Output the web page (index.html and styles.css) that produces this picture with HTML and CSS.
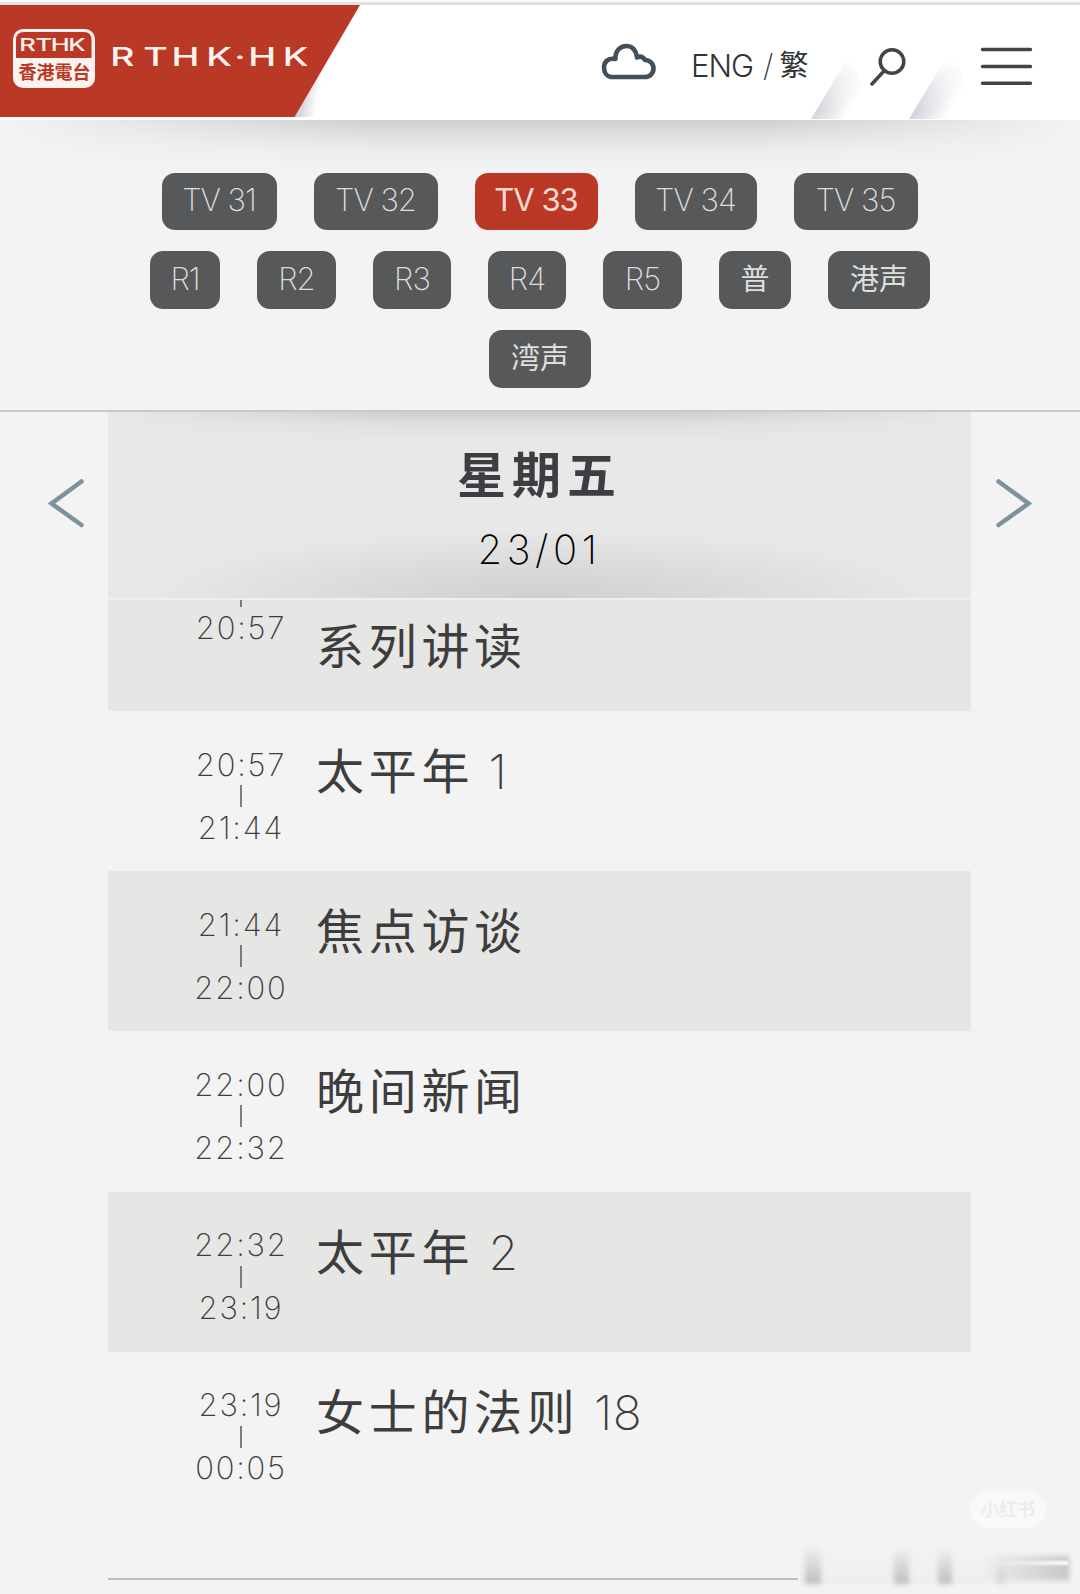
FILE: index.html
```html
<!DOCTYPE html>
<html lang="zh-Hans">
<head>
<meta charset="utf-8">
<title>RTHK.HK</title>
<link rel="stylesheet" href="styles.css">
</head>
<body>
<header class="topbar">
  <svg class="brand" width="380" height="114" viewBox="0 5 380 114" role="img" aria-label="RTHK.HK">
    <defs>
      <linearGradient id="fold" x1="0" y1="0" x2="1" y2="0.3"><stop offset="0.3" stop-color="#c9c4c8"/><stop offset="0.75" stop-color="#fff"/></linearGradient>
    </defs>
    <path d="M292 117L336 44L314 117Z" fill="url(#fold)"/>
    <path d="M0 5H360L294.500 117H0Z" fill="#b93826"/>
    <rect x="13" y="29" width="82" height="59" rx="10" fill="#fff3ef"/>
    <path d="M16 58V40Q16 32 24 32H84Q91.500 32 91.500 40V58Z" fill="#b93826"/>
    <g class="mark" transform="scale(1.5 1)"><text y="51" x="12.800 23.600 33.800 45.500">RTHK</text></g>
    <text class="mark-cn" x="18.500 36.500 54.500 72.500" y="78.500">香港電台</text>
    <g class="wordmark" transform="scale(1.5 1)"><text y="66.300" x="73.500 95.500 114.300 137.500 156.200 165.500 188.500">RTHK·HK</text></g>
  </svg>
  <svg class="cloud" width="56" height="38" viewBox="601 43 56 38"><path d="M611 77H645A8.500 8.500 0 0 0 645 60Q642 55 637 57.500C636 50 632 46 626.500 46C620 46 615 51 615.500 59C608 57.500 604 62 604 67.500C604 73 607 76.500 611 77Z"/></svg>
  <nav class="lang"><a>ENG</a><i>/</i><a class="trad">繁</a></nav>
  <svg class="tools" width="270" height="114" viewBox="810 5 270 114">
    <defs>
      <linearGradient id="s1" gradientUnits="userSpaceOnUse" x1="822" y1="103" x2="846" y2="117"><stop offset="0" stop-color="#d6d6dd"/><stop offset="1" stop-color="#fff"/></linearGradient>
      <linearGradient id="s2" gradientUnits="userSpaceOnUse" x1="920" y1="103" x2="946" y2="118"><stop offset="0" stop-color="#d3d3db"/><stop offset="1" stop-color="#fff"/></linearGradient>
      <linearGradient id="veil" x1="0" y1="0" x2="0" y2="1"><stop offset="0.25" stop-color="#fff"/><stop offset="1" stop-color="#fff" stop-opacity="0"/></linearGradient>
    </defs>
    <path d="M811 119L850 54L874 119Z" fill="url(#s1)"/>
    <path d="M909 119L953 46L976 119Z" fill="url(#s2)"/>
    <rect x="810" y="44" width="170" height="66" fill="url(#veil)"/>
    <g class="stroke"><circle cx="892" cy="61.500" r="11.800"/><path d="M884 71L872 84M982.500 49.500H1030.500M982.500 66.500H1030.500M982.500 83.300H1030.500"/></g>
  </svg>
</header>

<section class="channels">
  <div class="line tv"><a class="w115">TV 31</a><a class="w124">TV 32</a><a class="w123 on">TV 33</a><a class="w122">TV 34</a><a class="w124">TV 35</a></div>
  <div class="line"><a class="w70">R1</a><a class="w79">R2</a><a class="w78">R3</a><a class="w78">R4</a><a class="w79">R5</a><a class="w72 cn">普</a><a class="w102 cn">港声</a></div>
  <div class="line"><a class="w102 cn">湾声</a></div>
</section>

<main class="schedule">
  <svg class="arrow" width="108" height="186" viewBox="0 412 108 186"><path d="M81.500 481.500L51.500 503.500L81.500 525"/></svg>
  <div class="programme">
    <div class="day"><h1>星期五</h1><p>23/01</p></div>
    <div class="row shade cut"><div class="time"><b></b><span>20:57</span></div><h2>系列讲读</h2></div>
    <div class="row"><div class="time"><span>20:57</span><b></b><span>21:44</span></div><h2>太平年 <em>1</em></h2></div>
    <div class="row shade"><div class="time"><span>21:44</span><b></b><span>22:00</span></div><h2>焦点访谈</h2></div>
    <div class="row"><div class="time"><span>22:00</span><b></b><span>22:32</span></div><h2>晚间新闻</h2></div>
    <div class="row shade"><div class="time"><span>22:32</span><b></b><span>23:19</span></div><h2>太平年 <em>2</em></h2></div>
    <div class="row"><div class="time"><span>23:19</span><b></b><span>00:05</span></div><h2>女士的法则 <em>18</em></h2></div>
    <div class="end"></div>
  </div>
  <svg class="arrow" width="109" height="186" viewBox="971 412 109 186"><path d="M998.500 481.500L1028.500 503.500L998.500 525"/></svg>
</main>

<div class="watermark">小红书</div>
<div class="smudge"><i class="a"></i><i class="b"></i><i class="c"></i><i class="d"></i><i class="e"></i><i class="f"></i></div>
</body>
</html>
```
FILE: styles.css
```css
* { box-sizing: border-box; }
body {
  margin: 0; width: 1080px; height: 1594px; overflow: hidden; position: relative;
  background: #f3f3f3; color: #3d3d3d;
  font-family: Inter, "Noto Sans CJK SC", sans-serif;
}
svg { display: block; flex: none; }
i, em { font-style: normal; }

.topbar { height: 120px; padding-top: 5px; display: flex; background: linear-gradient(#fafafa 0 2px, #dfe1e1 2px 5px, #fff 5px); }
.mark, .wordmark { fill: #fff3ef; font-family: Inter, sans-serif; }
.mark { font-size: 17px; font-weight: 450; }
.mark-cn { fill: #b93826; font: 700 18px "Noto Sans CJK TC", sans-serif; }
.wordmark { font-size: 25px; font-weight: 450; }
.cloud { margin: 38px 0 0 221px; fill: none; stroke: #43505c; stroke-width: 4.6; stroke-linejoin: round; }
.lang { width: 153px; height: 114px; padding-left: 34px; display: flex; align-items: center; font-size: 31px; line-height: 40px; letter-spacing: -1px; font-weight: 300; color: #303438; padding-top: 7px; }
.lang i { margin: 0 7px 0 10px; font-weight: 200; }
.lang .trad { font: 400 29px/40px "Noto Sans CJK TC", sans-serif; margin-top: -5px; }
.stroke { fill: none; stroke: #444446; stroke-width: 3.5; stroke-linecap: round; }

.channels {
  height: 292px; padding-top: 53px; border-bottom: 2px solid #c9c9cb;
  background:
    linear-gradient(90deg, #f3f3f3, rgba(243,243,243,0) 35%, rgba(243,243,243,0) 70%, #f3f3f3) 0 0 / 100% 50px no-repeat,
    linear-gradient(#cecece, #dedede 14px, #ebebeb 28px, #f3f3f3 50px) 0 0 / 100% 50px no-repeat;
}
.line { display: flex; justify-content: center; gap: 37px; margin-bottom: 21px; }
.line a { height: 58px; border-radius: 13px; background: #575859; color: #dedede; font-size: 31px; line-height: 56px; font-weight: 250; letter-spacing: -1px; text-align: center; }
.tv a { height: 57px; line-height: 54px; padding-right: 1px; }
.line .on { background: #b93826; color: #ffd9d1; font-weight: 400; }
.line .cn { font-family: "Noto Sans CJK SC", sans-serif; font-weight: 400; font-size: 29px; line-height: 53px; letter-spacing: 0; }
.w70 { width: 70px; } .w72 { width: 72px; } .w78 { width: 78px; } .w79 { width: 79px; } .w102 { width: 102px; }
.w115 { width: 115px; } .w122 { width: 122px; } .w123 { width: 123px; } .w124 { width: 124px; }

.schedule { display: flex; align-items: flex-start; }
.arrow { fill: none; stroke: #7d929b; stroke-width: 4.5; stroke-linecap: round; }
.programme { width: 863px; }
.day {
  height: 186px; text-align: center;
  background:
    radial-gradient(ellipse 400px 70px at 50% 100%, #cfcfcf 0, #dadada 45%, rgba(232,232,232,0) 100%),
    linear-gradient(90deg, #e8e8e8, rgba(232,232,232,0) 35%, rgba(232,232,232,0) 65%, #e8e8e8) 0 0 / 100% 30px no-repeat,
    linear-gradient(#cdcdcd, #dfdfdf 12px, #e8e8e8 30px) 0 0 / 100% 30px no-repeat,
    #e8e8e8;
}
.day h1 { margin: 0; padding: 29px 0 0; font: 700 49px/62px "Noto Sans CJK SC", sans-serif; letter-spacing: 6px; color: #3d3e42; }
.day p { margin: 0; padding-top: 23px; font-size: 40px; line-height: 48px; font-weight: 250; letter-spacing: 4.600px; color: #000; }
.row { height: 160.200px; padding: 37.500px 0 0 76px; display: grid; grid-template-columns: 114px 1fr; column-gap: 18px; align-items: start; }
.shade { background: #e6e6e5; }
.cut { height: 113px; padding-top: 4px; border-top: 2px solid #efefee; }
.time { display: flex; flex-direction: column; align-items: center; font-size: 31px; line-height: 32px; font-weight: 250; letter-spacing: 1.800px; }
.time b { width: 2px; height: 22px; margin: 4.500px 0; background: #7c7c7c; }
.cut .time b { height: 7px; margin: -4px 0 5px; }
.row h2 { margin: -10.500px 0 0; font: 400 48px/60px "Noto Sans CJK SC", sans-serif; letter-spacing: 4.700px; }
.cut h2 { margin-top: 8.500px; }
.row em { margin-left: -1px; font-family: Inter, sans-serif; font-weight: 250; letter-spacing: 0.500px; }
.end { height: 68px; border-bottom: 2px solid #bdbdbd; width: 690px; }

.watermark { position: absolute; left: 970px; top: 1491px; width: 76px; height: 37px; border-radius: 19px; background: #f9f9f9; color: #ececec; text-align: center; font: 700 18px/34px "Noto Sans CJK SC", sans-serif; }
.smudge { position: absolute; left: 800px; top: 1542px; width: 271px; height: 42px; background: linear-gradient(rgba(240,240,240,0), #efefef 90%); }
.smudge i { position: absolute; bottom: 0; filter: blur(2.5px); background: linear-gradient(rgba(190,190,190,0), #bebebe); }
.smudge .a { left: 5px; width: 16px; height: 38px; }
.smudge .b { left: 94px; width: 15px; height: 36px; }
.smudge .c { left: 138px; width: 14px; height: 36px; }
.smudge .d { left: 196px; width: 10px; height: 28px; opacity: .4; }
.smudge .e { left: 185px; width: 84px; height: 24px; bottom: 4px; background: linear-gradient(100deg, rgba(215,215,215,0), #c6c6c6); }
.smudge .f { left: 188px; width: 80px; height: 4px; bottom: 19px; background: linear-gradient(90deg, rgba(255,255,255,0), #fff); filter: blur(1px); }
```
